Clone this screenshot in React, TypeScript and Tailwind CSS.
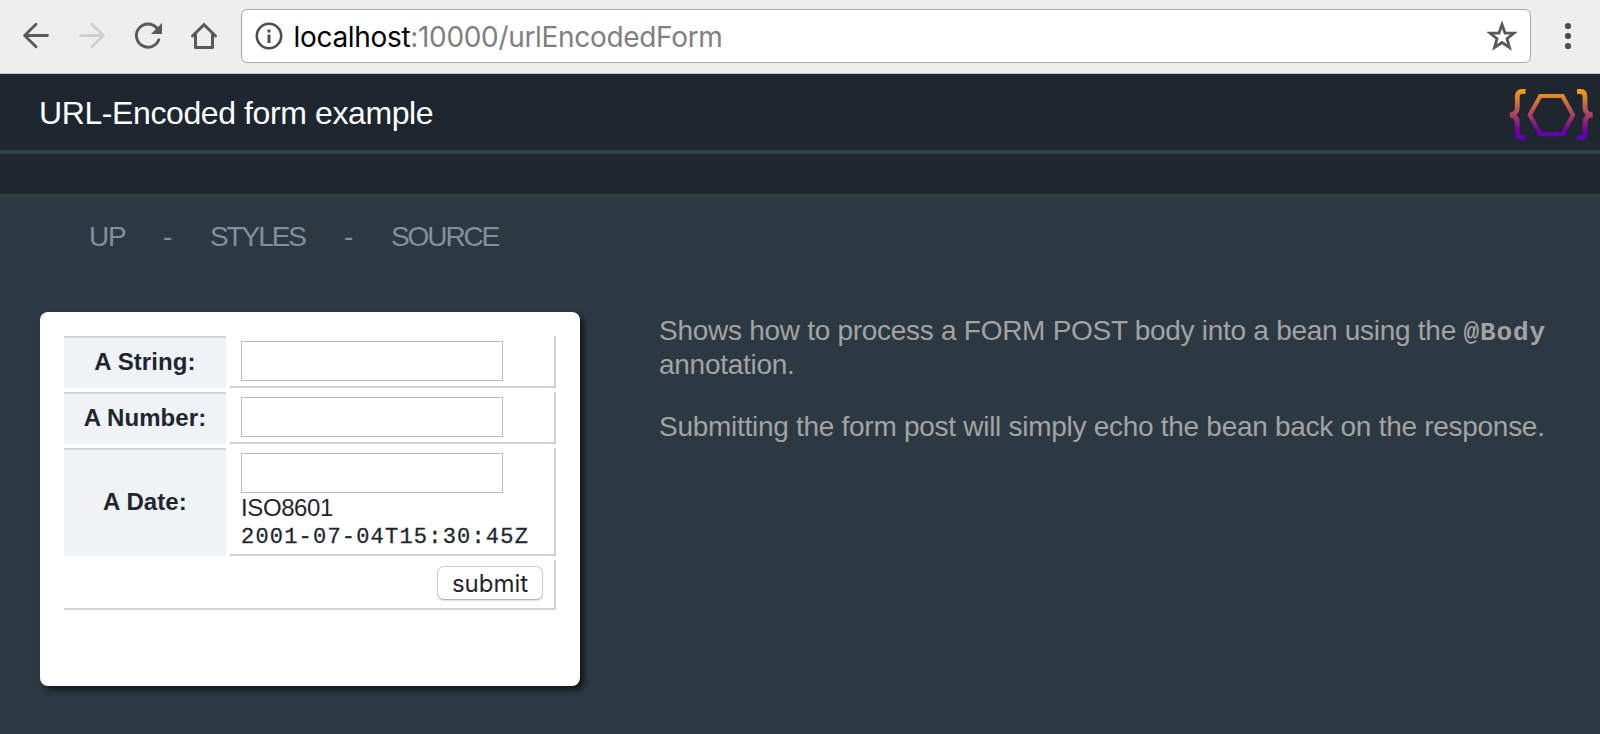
import React from 'react';

function BrowserIcons() {
  return (
    <svg width="230" height="73" viewBox="0 0 230 73" fill="none" className="shrink-0">
      <g stroke="#595959" strokeWidth="2.8" strokeLinecap="round" strokeLinejoin="round">
        <path d="M47.5 35.5H25M36 24.3L24.6 35.5L36 46.7" />
      </g>
      <g stroke="#cfcfcf" strokeWidth="2.8" strokeLinecap="round" strokeLinejoin="round">
        <path d="M80.5 35.5H103M92 24.3L103.4 35.5L92 46.7" />
      </g>
      <path d="M156.8 28A11.6 11.6 0 1 0 158.8 39.8" stroke="#595959" strokeWidth="2.9" strokeLinecap="round" />
      <path d="M162 23V34H151Z" fill="#595959" />
      <path d="M192.5 36L204 24.7L215.5 36" stroke="#595959" strokeWidth="3" strokeLinecap="round" />
      <path d="M195.5 34V47.5H212.5V34" stroke="#595959" strokeWidth="3" strokeLinejoin="round" />
    </svg>
  );
}

function Toolbar() {
  return (
    <div className="flex h-[74px] items-start border-b border-[#c9c9c9] bg-[#eeeeee]">
      <BrowserIcons />
      <div className="ml-[11px] mt-[9px] flex h-[54px] w-[1290px] items-center rounded-[6px] border border-[#a8a8a8] bg-white">
        <svg width="28" height="28" viewBox="0 0 28 28" className="ml-[12.5px] shrink-0">
          <circle cx="14" cy="14" r="12.2" fill="none" stroke="#4d4d4d" strokeWidth="2.6" />
          <rect x="12.5" y="7.5" width="3" height="3" fill="#4d4d4d" />
          <rect x="12.5" y="12.5" width="3" height="8.5" fill="#4d4d4d" />
        </svg>
        <span className="ml-[11px] mt-[2px] whitespace-nowrap font-['Inter'] text-[28px] leading-[50px] tracking-[-0.32px] text-[#808080]">
          <span className="text-black">localhost</span>:10000/urlEncodedForm
        </span>
        <svg width="30" height="30" viewBox="0 0 30 30" className="ml-auto mr-[13.5px] shrink-0">
          <path d="M15 3.5L18 12L27 12.2L20 17.7L22.5 26.5L15 21.5L7.5 26.5L10 17.7L3 12.2L12 12Z" fill="none" stroke="#595959" strokeWidth="2.8" />
        </svg>
      </div>
      <svg width="12" height="73" viewBox="0 0 12 73" className="ml-[31px] shrink-0" fill="#4d4d4d">
        <circle cx="6" cy="26" r="3.1" />
        <circle cx="6" cy="36" r="3.1" />
        <circle cx="6" cy="46" r="3.1" />
      </svg>
    </div>
  );
}

function Logo() {
  return (
    <svg width="84" height="54" viewBox="0 0 84 54" fill="none">
      <defs>
        <linearGradient id="sunset" gradientUnits="userSpaceOnUse" x1="0" y1="2" x2="0" y2="52">
          <stop offset="0" stopColor="#f0a01a" />
          <stop offset="0.5" stopColor="#a84060" />
          <stop offset="0.8" stopColor="#7000a0" />
          <stop offset="1" stopColor="#5a00c8" />
        </linearGradient>
      </defs>
      <g stroke="url(#sunset)">
        <path d="M16.5 3.5H13Q8.3 3.5 8.3 9V19Q8.3 26.5 1 27Q8.3 27.5 8.3 35V44Q8.3 49.7 13 49.7H16.5" strokeWidth="4.8" />
        <path d="M68 3.5H71.5Q76 3.5 76 9V19Q76 26.5 83.5 27Q76 27.5 76 35V44Q76 49.7 71.5 49.7H68" strokeWidth="4.8" />
        <path d="M31.3 8H53.5L64 27L53.5 46.2H31.3L20.7 27Z" strokeWidth="4.2" />
      </g>
    </svg>
  );
}

function Row({ label, children, height }: { label: string; children: React.ReactNode; height: string }) {
  return (
    <div className={'flex gap-1 ' + height}>
      <div className="flex w-[162px] items-center justify-center border-t-2 border-[#cfd3d7] bg-[#eff3f6] pb-[2px] text-[24px] font-bold leading-[28px] tracking-[0.1px]">
        {label}
      </div>
      <div className="w-[326px] border-b-2 border-r-2 border-[#cfd3d7] pl-[11px] pt-[5px]">{children}</div>
    </div>
  );
}

function Field({ label }: { label: string }) {
  return <input aria-label={label} className="block h-[40px] w-[262px] border border-[#bababa] bg-white px-2 outline-none" />;
}

export default function App() {
  return (
    <div className="flex h-[734px] w-[1600px] flex-col overflow-hidden bg-[#2d3942] font-['Liberation_Sans',sans-serif]">
      <Toolbar />
      <header className="flex h-[80px] items-start justify-between border-b-4 border-[#2c423a] bg-[#1e272f]">
        <h1 className="ml-[39px] mt-[20px] whitespace-nowrap text-[32px] leading-[38px] tracking-[-0.4px] text-white">URL-Encoded form example</h1>
        <div className="mr-[7px] mt-[14px]"><Logo /></div>
      </header>
      <div className="h-[44px] shrink-0 border-b-4 border-[#2c423a] bg-[#1e272f]" />
      <nav className="flex h-[114px] items-start pl-[89px] pt-[22px] text-[28px] leading-[34px] tracking-[-2.1px] text-[#81919b]">
        <a className="w-[74px] tracking-[-1.3px]">UP</a>
        <span className="w-[47px]">-</span>
        <a className="w-[134px]">STYLES</a>
        <span className="w-[47px]">-</span>
        <a>SOURCE</a>
      </nav>
      <main className="flex items-start">
        <form className="ml-[40px] flex h-[374px] w-[540px] flex-col gap-1 rounded-[8px] bg-white p-6 text-[#1e272f] shadow-[4px_4px_6px_#11161a]">
          <Row label="A String:" height="h-[52px]"><Field label="A String" /></Row>
          <Row label="A Number:" height="h-[52px]"><Field label="A Number" /></Row>
          <Row label="A Date:" height="h-[108px]">
            <Field label="A Date" />
            <div className="mt-px text-[24px] leading-[28px] tracking-[-0.4px]">ISO8601</div>
            <div className="mt-[2px] font-['Liberation_Mono',monospace] text-[22px] leading-[28px] tracking-[1.2px] [-webkit-text-stroke:0.3px]">2001-07-04T15:30:45Z</div>
          </Row>
          <div className="flex h-[50px] justify-end border-b-2 border-r-2 border-[#cfd3d7] pr-[11px] pt-[6px]">
            <button type="button" className="h-[34px] w-[106px] rounded-[7px] border border-[#cccccc] border-b-[#b5b5b5] bg-white pt-px font-['Inter'] text-[24px] leading-[30px] shadow-[0_1px_1px_#dddddd]">submit</button>
          </div>
        </form>
        <section className="ml-[79px] whitespace-nowrap text-[28px] leading-[34px] tracking-[-0.28px] text-[#a3a3a3]">
          <p className="mt-[2px]">
            Shows how to process a FORM POST body into a bean using the <code className="font-['Liberation_Mono',monospace] text-[26px] font-bold leading-none tracking-[0.9px]">@Body</code>
            <br />
            annotation.
          </p>
          <p className="mt-[28px]">Submitting the form post will simply echo the bean back on the response.</p>
        </section>
      </main>
    </div>
  );
}
